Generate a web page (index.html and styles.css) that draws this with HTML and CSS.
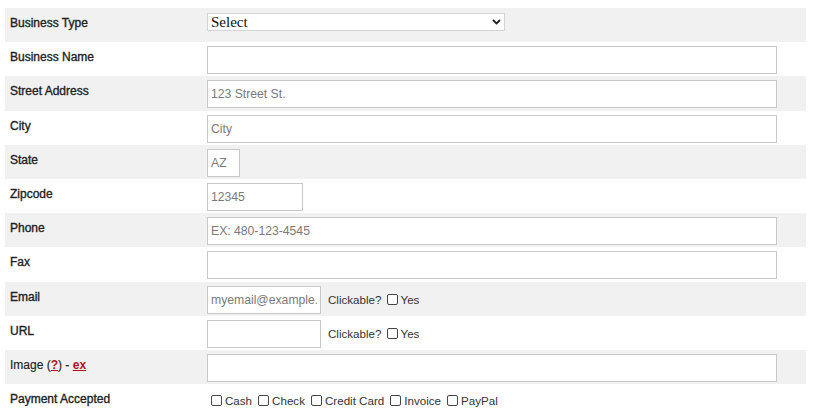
FILE: index.html
```html
<!DOCTYPE html>
<html>
<head>
<meta charset="utf-8">
<link rel="stylesheet" href="styles.css">
</head>
<body>
<table class="form">
  <tr class="row alt">
    <th class="label">Business Type</th>
    <td class="value">
      <span class="select-wrap">
        <select class="select"><option>Select</option></select>
        <svg class="chev" width="9" height="6" viewBox="0 0 9 6"><path d="M1 1 L4.5 4.5 L8 1" fill="none" stroke="#222" stroke-width="1.8"/></svg>
      </span>
    </td>
  </tr>
  <tr class="row">
    <th class="label">Business Name</th>
    <td class="value"><input class="field wide" type="text"></td>
  </tr>
  <tr class="row alt">
    <th class="label">Street Address</th>
    <td class="value"><input class="field wide" type="text" placeholder="123 Street St."></td>
  </tr>
  <tr class="row">
    <th class="label">City</th>
    <td class="value"><input class="field wide" type="text" placeholder="City"></td>
  </tr>
  <tr class="row alt">
    <th class="label">State</th>
    <td class="value"><input class="field state" type="text" placeholder="AZ"></td>
  </tr>
  <tr class="row">
    <th class="label">Zipcode</th>
    <td class="value"><input class="field zip" type="text" placeholder="12345"></td>
  </tr>
  <tr class="row alt">
    <th class="label">Phone</th>
    <td class="value"><input class="field wide" type="text" placeholder="EX: 480-123-4545"></td>
  </tr>
  <tr class="row">
    <th class="label">Fax</th>
    <td class="value"><input class="field wide" type="text"></td>
  </tr>
  <tr class="row alt">
    <th class="label">Email</th>
    <td class="value"><span class="inline"><input class="field short" type="text" placeholder="myemail@example.com"><span class="note">Clickable?</span><label class="opt"><input class="check" type="checkbox">Yes</label></span></td>
  </tr>
  <tr class="row">
    <th class="label">URL</th>
    <td class="value"><span class="inline"><input class="field short" type="text"><span class="note">Clickable?</span><label class="opt"><input class="check" type="checkbox">Yes</label></span></td>
  </tr>
  <tr class="row alt">
    <th class="label plain">Image (<a class="red" href="#">?</a>) - <a class="red" href="#">ex</a></th>
    <td class="value"><input class="field wide" type="text"></td>
  </tr>
  <tr class="row">
    <th class="label">Payment Accepted</th>
    <td class="value pay"><span class="pay-list"><label class="opt"><input class="check" type="checkbox">Cash</label><label class="opt"><input class="check" type="checkbox">Check</label><label class="opt"><input class="check" type="checkbox">Credit Card</label><label class="opt"><input class="check" type="checkbox">Invoice</label><label class="opt"><input class="check" type="checkbox">PayPal</label></span></td>
  </tr>
</table>
</body>
</html>
```
FILE: styles.css
```css
html, body {
  background: #ffffff;
}
body {
  margin: 8px 8px 0 5px;
  font-family: "Liberation Sans", Arial, sans-serif;
  font-size: 12px;
  color: #222222;
}
.form {
  width: 801px;
  border-collapse: collapse;
  border-spacing: 0;
}
.row {
  height: 34.2px;
}
.row.alt {
  background: #f1f1f1;
}
.label {
  width: 197px;
  padding: 0 0 4px 5px;
  text-align: left;
  vertical-align: middle;
  font-weight: normal;
  font-size: 12px;
  color: #222222;
  -webkit-text-stroke: 0.35px #222222;
  white-space: nowrap;
}
.label.plain {
  -webkit-text-stroke: 0.15px #222222;
}
.red {
  color: #b3121a;
  text-decoration: underline;
  font-weight: bold;
  -webkit-text-stroke: 0;
}
.value {
  padding: 2px 0 0 0;
  vertical-align: middle;
  font-size: 12px;
  color: #333333;
}
.field {
  box-sizing: border-box;
  height: 28px;
  margin: 0;
  padding: 0 3px;
  border: 1px solid #c8c8c8;
  background: #ffffff;
  font-family: "Liberation Sans", Arial, sans-serif;
  font-size: 12.2px;
  color: #333333;
  outline: none;
  display: block;
}
.field::placeholder {
  color: #7a7a7a;
}
.wide { width: 570px; }
.state { width: 33px; }
.zip { width: 96px; }
.short { width: 114px; }
.select-wrap {
  position: relative;
  display: block;
  width: 298px;
  margin-top: -8px;
}
.select {
  -webkit-appearance: none;
  appearance: none;
  box-sizing: border-box;
  display: block;
  width: 298px;
  height: 18px;
  margin: 0;
  padding: 0 0 0 3px;
  border: 1px solid #d4d4d4;
  border-radius: 0;
  background: #ffffff;
  font-family: "Liberation Serif", "Times New Roman", serif;
  font-size: 15px;
  line-height: 16px;
  color: #111111;
}
.chev {
  position: absolute;
  right: 4px;
  top: 6px;
}
.inline {
  display: flex;
  align-items: center;
}
.note {
  margin-left: 7px;
  font-size: 11.6px;
  color: #333333;
}
.opt {
  display: inline-flex;
  align-items: center;
  font-size: 11.6px;
  color: #333333;
}
.inline .opt {
  margin-left: 1px;
}
.check {
  -webkit-appearance: none;
  appearance: none;
  box-sizing: border-box;
  width: 11px;
  height: 11px;
  margin: 0 3px 0 4px;
  border: 1px solid #444444;
  border-radius: 2px;
  background: #ffffff;
}
.pay {
  padding-top: 0;
  padding-bottom: 2px;
}
.pay-list {
  display: flex;
  align-items: center;
}
.pay .opt {
  margin-right: 2px;
}
```
